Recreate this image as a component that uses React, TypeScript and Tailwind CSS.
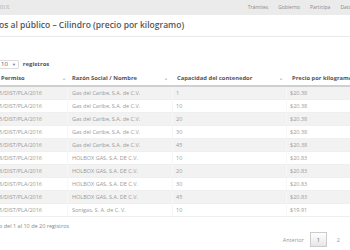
import React from 'react';

const rows = [
  { permiso: '5/DIST/PLA/2016', razon: 'Gas del Caribe, S.A. de C.V.', cap: '1', precio: '$20.38' },
  { permiso: '5/DIST/PLA/2016', razon: 'Gas del Caribe, S.A. de C.V.', cap: '10', precio: '$20.38' },
  { permiso: '5/DIST/PLA/2016', razon: 'Gas del Caribe, S.A. de C.V.', cap: '20', precio: '$20.38' },
  { permiso: '5/DIST/PLA/2016', razon: 'Gas del Caribe, S.A. de C.V.', cap: '30', precio: '$20.38' },
  { permiso: '5/DIST/PLA/2016', razon: 'Gas del Caribe, S.A. de C.V.', cap: '45', precio: '$20.38' },
  { permiso: '8/DIST/PLA/2016', razon: 'HOLBOX GAS, S.A. DE C.V.', cap: '10', precio: '$20.83' },
  { permiso: '8/DIST/PLA/2016', razon: 'HOLBOX GAS, S.A. DE C.V.', cap: '20', precio: '$20.83' },
  { permiso: '8/DIST/PLA/2016', razon: 'HOLBOX GAS, S.A. DE C.V.', cap: '30', precio: '$20.83' },
  { permiso: '8/DIST/PLA/2016', razon: 'HOLBOX GAS, S.A. DE C.V.', cap: '45', precio: '$20.83' },
  { permiso: '5/DIST/PLA/2016', razon: 'Sonigas, S. A. de C. V.', cap: '10', precio: '$19.91' },
];

const SortIcon = () => <span className="text-[4px] text-[#c8c8c8] leading-none">▲</span>;

export default function App() {
  return (
    <div className="w-[350px] h-[250px] overflow-hidden bg-white font-['Open_Sans',sans-serif]">
      {/* barra superior */}
      <div className="h-[15px] bg-[#ebebeb] flex items-center justify-between">
        <span className="-ml-[1px] text-[7px] text-[#bdbdbd] font-['DejaVu_Serif',serif] leading-none">mx</span>
        <nav className="flex gap-[10px] text-[5px] text-[#8a8a8a] whitespace-nowrap -mr-[4px]">
          <span>Trámites</span>
          <span>Gobierno</span>
          <span>Participa</span>
          <span>Datos</span>
        </nav>
      </div>

      {/* titulo */}
      <div className="h-[22px] flex items-center border-b border-[#e9e9e9]">
        <h1 className="-ml-[1px] text-[8.5px] font-semibold text-[#555] whitespace-nowrap">
          os al público – Cilindro (precio por kilogramo)
        </h1>
      </div>

      {/* selector de registros */}
      <div className="mt-[23px] h-[9px] flex items-center gap-[4px] text-[6px] text-[#555]">
        <span className="flex items-center gap-[4px] border border-[#ddd] rounded-[1px] h-[9px] pr-[2px] -ml-[4px] pl-[4px]">
          <span>10</span>
          <span className="text-[4px] text-[#777]">▼</span>
        </span>
        <span className="font-bold">registros</span>
      </div>

      {/* tabla */}
      <div className="mt-[3px] text-[5.5px]">
        <div className="grid grid-cols-[68px_105px_114px_1fr] h-[15px] border-b-2 border-[#cfcfcf] font-bold text-[#555] text-[5.8px]">
          <div className="flex items-center justify-between pl-[1px] pr-[2px] whitespace-nowrap">
            <span>Permiso</span>
            <SortIcon />
          </div>
          <div className="flex items-center justify-between pl-[4px] pr-[5px] whitespace-nowrap">
            <span>Razón Social / Nombre</span>
            <SortIcon />
          </div>
          <div className="flex items-center justify-between pl-[4px] pr-[4px] whitespace-nowrap">
            <span>Capacidad del contenedor</span>
            <SortIcon />
          </div>
          <div className="flex items-center pl-[5px] whitespace-nowrap">
            <span>Precio por kilogramo</span>
          </div>
        </div>
        {rows.map((r, i) => (
          <div
            key={i}
            className={`grid grid-cols-[68px_105px_114px_1fr] h-[13px] border-b border-[#efefef] text-[#9a9a9a] whitespace-nowrap ${
              i % 2 === 0 ? 'bg-[#f2f2f2]' : 'bg-white'
            }`}
          >
            <div className="flex items-center -ml-[1px] border-r border-[#f7f7f7]">{r.permiso}</div>
            <div className="flex items-center pl-[4px] border-r border-[#f7f7f7]">{r.razon}</div>
            <div className="flex items-center pl-[3px] border-r border-[#f7f7f7]">{r.cap}</div>
            <div className="flex items-center pl-[3px]">{r.precio}</div>
          </div>
        ))}
      </div>

      {/* pie */}
      <div className="mt-[5px] text-[5.5px] text-[#888] whitespace-nowrap -ml-[1px]">
        o del 1 al 10 de 20 registros
      </div>
      <div className="mt-[2px] flex items-center justify-end text-[5.5px] text-[#999] pr-[10px]">
        <span className="mr-[6px]">Anterior</span>
        <span className="w-[17px] h-[15px] flex items-center justify-center border border-[#ccc] bg-gradient-to-b from-white to-[#e6e6e6] text-[#666]">
          1
        </span>
        <span className="ml-[10px]">2</span>
      </div>
    </div>
  );
}
